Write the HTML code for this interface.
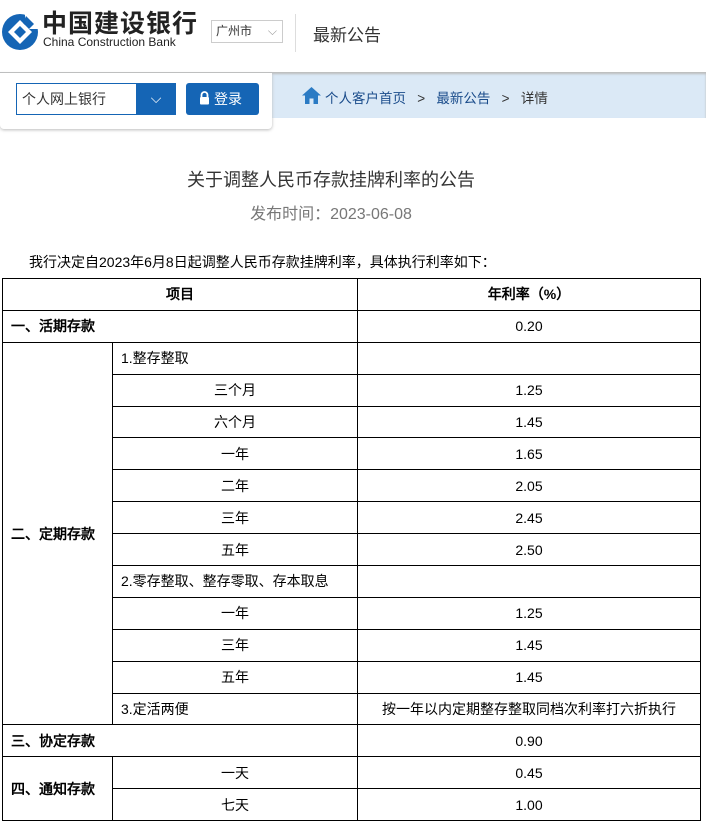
<!DOCTYPE html>
<html><head><meta charset="utf-8"><style>
*{margin:0;padding:0;box-sizing:border-box}
body{width:706px;height:826px;overflow:hidden;background:#fff;font-family:"Liberation Sans","Noto Sans CJK SC",sans-serif;position:relative;color:#333}
.abs{position:absolute}
table{position:absolute;left:2px;top:278px;border-collapse:collapse;table-layout:fixed;font-size:14px;color:#000;font-family:"Liberation Sans","WenQuanYi Zen Hei",sans-serif}
td{border:1px solid #000;height:31.9px;padding:0 8px;white-space:nowrap}
.c{text-align:center}
.b{font-weight:bold}
</style></head><body>
<svg class="abs" style="left:1px;top:13px" width="38" height="38" viewBox="0 0 38 38">
<circle cx="19" cy="19" r="18" fill="#1565b5"/>
<path d="M19 7 L31 19 L19 31 L7 19 Z" fill="#fff"/>
<path d="M19 13 L25 19 L19 25 L13 19 Z" fill="#1565b5"/>
<rect x="24" y="0" width="14" height="16" fill="#fff"/>
<path d="M25 3 L33 11 L28 16 L22 10Z" fill="#1565b5"/>
</svg>
<div class="abs" style="left:42px;top:10px;font-size:25px;font-weight:bold;color:#222;letter-spacing:1px;line-height:28px">中国建设银行</div>
<div class="abs" style="left:43px;top:36px;font-size:12px;color:#222;line-height:13px">China Construction Bank</div>
<div class="abs" style="left:211px;top:20px;width:72px;height:23px;border:1px solid #ccc;font-size:12px;color:#333;line-height:21px;padding-left:4px">广州市<span style="position:absolute;right:5px;top:0;color:#999">⌵</span></div>
<div class="abs" style="left:295px;top:14px;width:1px;height:38px;background:#ddd"></div>
<div class="abs" style="left:313px;top:21px;font-size:17px;color:#333">最新公告</div>
<div class="abs" style="left:0;top:72px;width:706px;height:46px;background:#dbe9f6;box-shadow:inset 0 2px 2px #bbb"></div>
<div class="abs" style="left:0;top:73px;width:272px;height:56px;background:#fff;box-shadow:0 1px 3px #bbb;border-radius:0 0 4px 4px"></div>
<div class="abs" style="left:16px;top:83px;width:160px;height:32px;border:1px solid #1565b5;background:#fff;font-size:14px;color:#333;line-height:30px;padding-left:5px">个人网上银行</div>
<div class="abs" style="left:136px;top:83px;width:40px;height:32px;background:#1565b5;color:#fff;text-align:center;line-height:30px;font-size:14px">⌵</div>
<div class="abs" style="left:186px;top:83px;width:73px;height:32px;background:#1565b5;border-radius:3px;color:#fff;font-size:14px;line-height:32px;padding-left:28px">登录</div>
<svg class="abs" style="left:199px;top:91px" width="11" height="14" viewBox="0 0 11 14"><path d="M2.5 6V4a3 3 0 0 1 6 0v2" stroke="#fff" stroke-width="1.8" fill="none"/><rect x="1" y="6" width="9" height="7.5" rx="1" fill="#fff"/></svg>
<svg class="abs" style="left:302px;top:87px" width="19" height="17" viewBox="0 0 19 17"><path d="M9.5 0 L19 8.5 H16 V17 H11.5 V11.5 H7.5 V17 H3 V8.5 H0Z" fill="#2b7bc4"/></svg>
<div class="abs" style="left:325px;top:87px;font-size:13.5px;color:#1a4c8b;white-space:pre">个人客户首页   <span style="color:#333">&gt;</span>   最新公告   <span style="color:#333">&gt;</span>   <span style="color:#333">详情</span></div>
<div class="abs" style="left:0;width:662px;top:166px;text-align:center;font-size:18px;color:#333">关于调整人民币存款挂牌利率的公告</div>
<div class="abs" style="left:0;width:662px;top:200px;text-align:center;font-size:16px;color:#777">发布时间：2023-06-08</div>
<div class="abs" style="left:29px;top:252px;font-size:14px;color:#000;font-family:'Liberation Sans','WenQuanYi Zen Hei',sans-serif">我行决定自2023年6月8日起调整人民币存款挂牌利率，具体执行利率如下：</div>
<table>
<colgroup><col style="width:110px"><col style="width:245px"><col style="width:343px"></colgroup>
<tr><td colspan="2" class="c b">项目</td><td class="c b">年利率（%）</td></tr>
<tr><td colspan="2" class="b">一、活期存款</td><td class="c">0.20</td></tr>
<tr><td rowspan="12" class="b">二、定期存款</td><td>1.整存整取</td><td></td></tr>
<tr><td class="c">三个月</td><td class="c">1.25</td></tr>
<tr><td class="c">六个月</td><td class="c">1.45</td></tr>
<tr><td class="c">一年</td><td class="c">1.65</td></tr>
<tr><td class="c">二年</td><td class="c">2.05</td></tr>
<tr><td class="c">三年</td><td class="c">2.45</td></tr>
<tr><td class="c">五年</td><td class="c">2.50</td></tr>
<tr><td>2.零存整取、整存零取、存本取息</td><td></td></tr>
<tr><td class="c">一年</td><td class="c">1.25</td></tr>
<tr><td class="c">三年</td><td class="c">1.45</td></tr>
<tr><td class="c">五年</td><td class="c">1.45</td></tr>
<tr><td>3.定活两便</td><td class="c">按一年以内定期整存整取同档次利率打六折执行</td></tr>
<tr><td colspan="2" class="b">三、协定存款</td><td class="c">0.90</td></tr>
<tr><td rowspan="2" class="b">四、通知存款</td><td class="c">一天</td><td class="c">0.45</td></tr>
<tr><td class="c">七天</td><td class="c">1.00</td></tr>
</table>
</body></html>
